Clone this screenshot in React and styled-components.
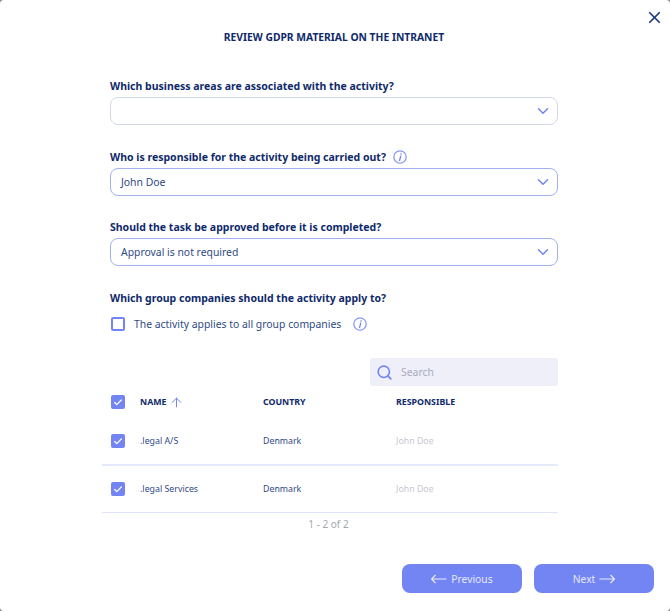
import React from 'react';
import styled, { createGlobalStyle } from 'styled-components';
import { Search, ChevronDown, ArrowUp, X, Check } from 'lucide-react';

const GlobalStyle = createGlobalStyle`
  html, body {
    margin: 0;
    padding: 0;
    background: #8a8a8a;
    font-family: "Noto Sans", "Open Sans", sans-serif;
    color: #0f2a6b;
  }
`;

const Modal = styled.div`
  position: relative;
  box-sizing: border-box;
  width: 670px;
  height: 611px;
  padding: 30px 112px 0 110px;
  background: #ffffff;
  border-radius: 4px;
  overflow: hidden;
`;

const CloseButton = styled.button`
  position: absolute;
  top: 8px;
  right: 6px;
  padding: 0;
  display: flex;
  border: none;
  background: none;
  color: #1c3b80;
`;

const Title = styled.h1`
  margin: 0 0 32px;
  font-size: 10.3px;
  line-height: 14px;
  font-weight: 700;
  text-align: center;
  text-transform: uppercase;
  color: #0f2a6b;
`;

const Field = styled.div`
  margin-bottom: 21.5px;
`;

const Label = styled.label`
  display: flex;
  align-items: center;
  gap: 7px;
  height: 20px;
  margin-bottom: 1px;
  font-size: 10.5px;
  font-weight: 700;
  color: #0f2a6b;
`;

const Select = styled.div`
  box-sizing: border-box;
  display: flex;
  align-items: center;
  justify-content: space-between;
  height: 28px;
  padding: 0 5.5px 0 10px;
  border: 1.5px solid ${(props) => (props.$empty ? '#d3d8e6' : '#a3aff7')};
  border-radius: 8px;
  font-size: 10.4px;
  color: #2f4a85;
  svg {
    color: #7385f3;
  }
`;

const ApplyRow = styled.div`
  display: flex;
  align-items: center;
  height: 20px;
  margin-top: 6.5px;
  padding-left: 1px;
  font-size: 10.4px;
  color: #2f4a85;
`;

const ApplyText = styled.span`
  margin: 0 12px 0 9px;
`;

const CheckBox = styled.span`
  box-sizing: border-box;
  display: inline-flex;
  align-items: center;
  justify-content: center;
  flex-shrink: 0;
  width: 14px;
  height: 14px;
  border: 2px solid #7385f3;
  border-radius: 2px;
  background: ${(props) => (props.$checked ? '#7385f3' : '#ffffff')};
  color: #ffffff;
`;

const SearchRow = styled.div`
  display: flex;
  justify-content: flex-end;
  margin-top: 24px;
`;

const SearchBox = styled.div`
  box-sizing: border-box;
  display: flex;
  align-items: center;
  gap: 8px;
  width: 188px;
  height: 28px;
  padding: 0 6px;
  border-radius: 3px;
  background: #eeeff8;
  font-size: 10.4px;
  color: #a9acbb;
  svg {
    color: #7385f3;
  }
`;

const Table = styled.div`
  margin: 0 0 0 -8px;
`;

const Row = styled.div`
  box-sizing: border-box;
  display: grid;
  grid-template-columns: 29px 123px 133px 1fr;
  align-items: center;
  height: ${(props) => props.$height}px;
  padding-left: 9px;
  border-bottom: ${(props) => props.$line || 'none'};
`;

const HeadCell = styled.div`
  display: flex;
  align-items: center;
  gap: 3px;
  font-size: 8.8px;
  font-weight: 700;
  color: #0f2a6b;
  svg {
    color: #7385f3;
  }
`;

const Cell = styled.div`
  font-size: 8.8px;
  color: ${(props) => (props.$muted ? '#c6c8d0' : '#2f4a85')};
`;

const Pager = styled.div`
  margin-top: 4px;
  padding-right: 3px;
  font-size: 10px;
  line-height: 14px;
  text-align: center;
  color: #a4a6ae;
`;

const Footer = styled.div`
  position: absolute;
  right: 16px;
  bottom: 18px;
  display: flex;
  gap: 12px;
`;

const NavButton = styled.button`
  display: flex;
  align-items: center;
  justify-content: center;
  gap: 4px;
  width: 120px;
  height: 29px;
  padding: 0;
  border: none;
  border-radius: 8px;
  background: #7385f3;
  font-family: inherit;
  font-size: 10.3px;
  color: #e4e8ff;
`;

const companies = [
  { name: '.legal A/S', country: 'Denmark', responsible: 'John Doe', height: 48, line: '2px solid #e6eafd' },
  { name: '.legal Services', country: 'Denmark', responsible: 'John Doe', height: 47, line: '1px solid #dfe3fb' },
];

const Checked = () => (
  <CheckBox $checked>
    <Check size={11} strokeWidth={3} />
  </CheckBox>
);

const Chevron = () => <ChevronDown size={18} strokeWidth={2} />;

const InfoIcon = () => (
  <svg width="14" height="14" viewBox="0 0 14 14" fill="none">
    <circle cx="7" cy="7" r="6.2" stroke="#8b9af5" strokeWidth="1.3" />
    <path d="M7.7 6.2 L6.6 10.4" stroke="#6f82f2" strokeWidth="1.3" strokeLinecap="round" />
    <circle cx="8" cy="4" r="0.8" fill="#6f82f2" />
  </svg>
);

const LongArrow = ({ flip }) => (
  <svg width="16" height="10" viewBox="0 0 16 10" fill="none" style={{ transform: flip ? 'scaleX(-1)' : undefined }}>
    <path d="M0.5 5 H15.5 M11.5 1 L15.5 5 L11.5 9" stroke="#e9ecff" strokeWidth="1.2" />
  </svg>
);

const App = () => (
  <Modal>
    <GlobalStyle />
    <CloseButton aria-label="Close">
      <X size={19} strokeWidth={2.2} />
    </CloseButton>
    <Title>Review GDPR material on the intranet</Title>

    <Field>
      <Label>Which business areas are associated with the activity?</Label>
      <Select $empty>
        <span />
        <Chevron />
      </Select>
    </Field>
    <Field>
      <Label>
        Who is responsible for the activity being carried out?
        <InfoIcon />
      </Label>
      <Select>
        John Doe
        <Chevron />
      </Select>
    </Field>
    <Field>
      <Label>Should the task be approved before it is completed?</Label>
      <Select>
        Approval is not required
        <Chevron />
      </Select>
    </Field>

    <Label>Which group companies should the activity apply to?</Label>
    <ApplyRow>
      <CheckBox />
      <ApplyText>The activity applies to all group companies</ApplyText>
      <InfoIcon />
    </ApplyRow>

    <SearchRow>
      <SearchBox>
        <Search size={17} strokeWidth={2.3} />
        Search
      </SearchBox>
    </SearchRow>

    <Table>
      <Row $height={32}>
        <Checked />
        <HeadCell>
          NAME
          <ArrowUp size={15} strokeWidth={1.6} />
        </HeadCell>
        <HeadCell>COUNTRY</HeadCell>
        <HeadCell>RESPONSIBLE</HeadCell>
      </Row>
      {companies.map((company) => (
        <Row key={company.name} $height={company.height} $line={company.line}>
          <Checked />
          <Cell>{company.name}</Cell>
          <Cell>{company.country}</Cell>
          <Cell $muted>{company.responsible}</Cell>
        </Row>
      ))}
      <Pager>1 - 2 of 2</Pager>
    </Table>

    <Footer>
      <NavButton>
        <LongArrow flip />
        Previous
      </NavButton>
      <NavButton>
        Next
        <LongArrow />
      </NavButton>
    </Footer>
  </Modal>
);

export default App;
